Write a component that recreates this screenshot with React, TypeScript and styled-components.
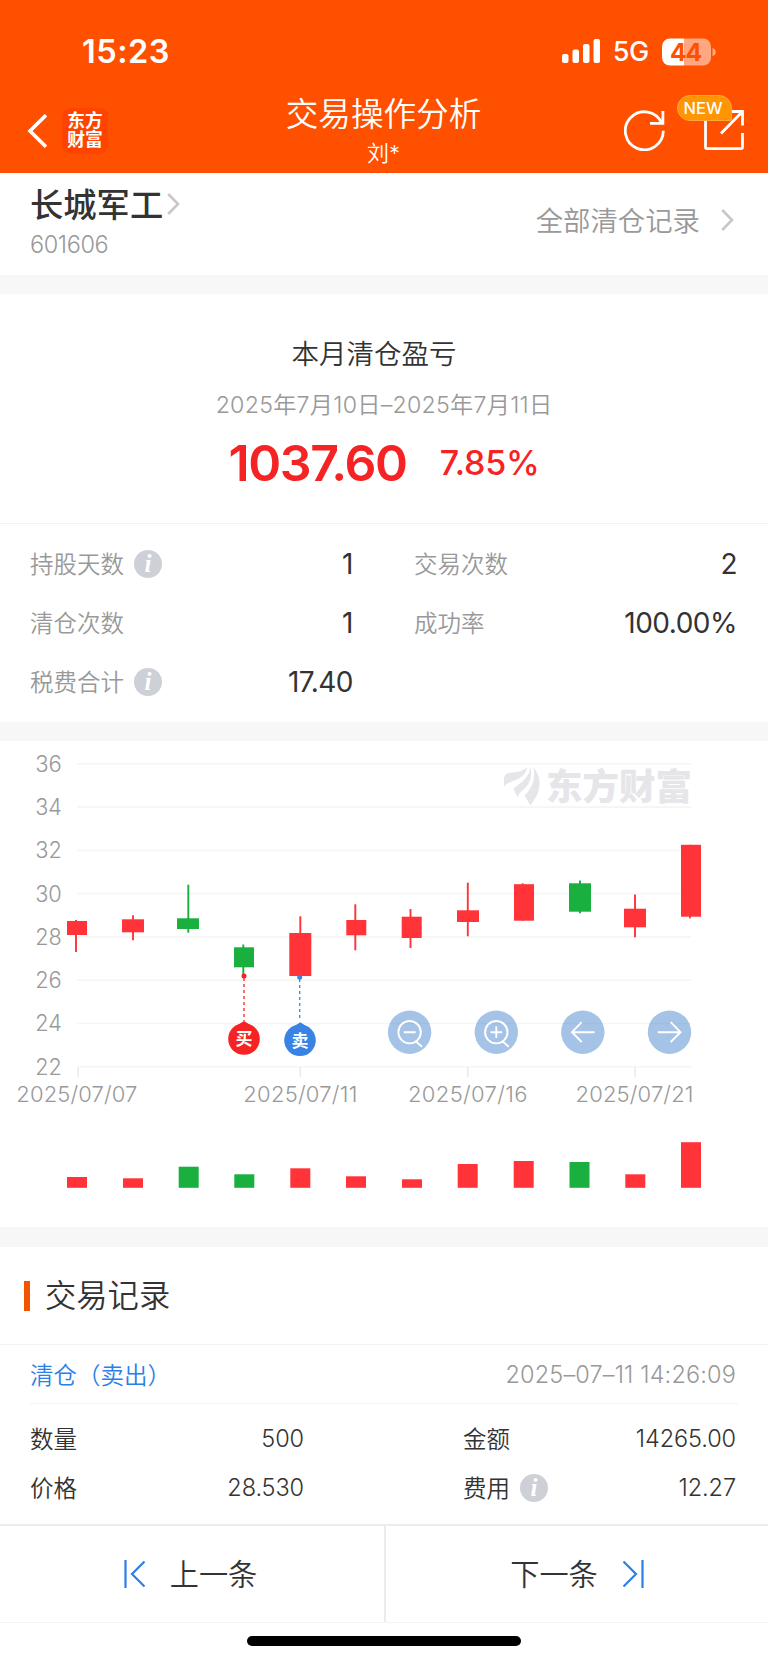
import React from 'react';
import styled, { createGlobalStyle } from 'styled-components';

const GlobalStyle = createGlobalStyle`
  * { box-sizing: border-box; }
  body { margin: 0; background: #fff; font-family: Inter, "Noto Sans CJK SC", sans-serif; color: #333; }
`;

const Screen = styled.div`
  width: 768px;
  height: 1663px;
  display: flex;
  flex-direction: column;
  background: #fff;
  overflow: hidden;
`;

const Header = styled.header`
  height: 173px;
  background: #ff5000;
  color: #fff;
  display: flex;
  flex-direction: column;
`;

const StatusBar = styled.div`
  height: 92px;
  padding: 11px 52px 0 82px;
  display: flex;
  align-items: center;
  justify-content: space-between;
`;

const Clock = styled.span`
  font-size: 32.5px;
  font-weight: 600;
  letter-spacing: 0.5px;
`;

const StatusRight = styled.div`
  display: flex;
  align-items: center;
`;

const Network = styled.span`
  font-size: 27px;
  font-weight: 500;
  letter-spacing: -0.3px;
  margin: 0 13px 0 12px;
`;

const NavBar = styled.div`
  flex: 1;
  display: grid;
  grid-template-columns: 200px 1fr 200px;
`;

const NavLeft = styled.div`
  display: flex;
  align-items: center;
  padding: 0 0 4px 27px;
`;

const NavRight = styled.div`
  display: flex;
  align-items: center;
  justify-content: flex-end;
  padding: 0 24px 5px 0;
`;

const AppLogo = styled.div`
  width: 46px;
  height: 46px;
  margin-left: 15px;
  border-radius: 9px;
  background: #ff4300;
  display: flex;
  flex-direction: column;
  align-items: center;
  justify-content: center;
  padding-bottom: 1px;
  font-size: 17.8px;
  font-weight: 700;
  line-height: 19.5px;
`;

const NavCenter = styled.div`
  display: flex;
  flex-direction: column;
  align-items: center;
  padding-right: 1px;
`;

const NavTitle = styled.h1`
  margin: 0;
  font-size: 32.6px;
  font-weight: 350;
  line-height: 45px;
`;

const NavSub = styled.span`
  font-size: 22px;
  font-weight: 350;
  line-height: 32px;
`;

const ShareWrap = styled.div`
  position: relative;
  width: 40px;
  height: 40px;
  margin-left: 39px;
`;

const NewBadge = styled.span`
  position: absolute;
  left: -27px;
  top: -15px;
  width: 55px;
  height: 26px;
  padding-right: 3px;
  border-radius: 13px 13px 2px 13px;
  background: #ff9500;
  border: 1px solid #ffa83a;
  font-size: 16.5px;
  font-weight: 500;
  line-height: 25px;
  text-align: center;
`;

const StockBar = styled.section`
  height: 102px;
  padding: 0 34px 0 30px;
  display: flex;
  justify-content: space-between;
`;

const StockName = styled.div`
  display: flex;
  align-items: center;
  height: 62px;
  font-size: 33.3px;
  font-weight: 500;
  gap: 4px;
`;

const StockCode = styled.div`
  font-size: 23.5px;
  font-weight: 350;
  line-height: 20px;
  letter-spacing: -0.4px;
  color: #999;
`;

const Raised = styled.span<{ $by: number }>`
  display: block;
  padding-bottom: ${p => p.$by * 2}px;
`;

const AllRecords = styled.div`
  display: flex;
  align-items: center;
  height: 94px;
  gap: 21px;
  font-size: 27.4px;
  font-weight: 350;
  color: #999;
`;

const Divider = styled.div<{ $h: number }>`
  height: ${p => p.$h}px;
  flex: none;
  background: #f7f7f7;
`;

const Summary = styled.section`
  height: 230px;
  display: flex;
  flex-direction: column;
  align-items: center;
  border-bottom: 1px solid #f2f2f2;
`;

const SummaryTitle = styled.h2`
  margin: 40px 20px 0 0;
  font-size: 27.5px;
  font-weight: 350;
  line-height: 40px;
`;

const SummaryRange = styled.div`
  margin-top: 14px;
  font-size: 23.2px;
  font-weight: 350;
  line-height: 34px;
  letter-spacing: 0.25px;
  color: #999;
`;

const Profit = styled.div`
  display: flex;
  align-items: center;
  gap: 33px;
  height: 66px;
  margin-top: 8px;
  color: #f52323;
`;

const ProfitAmount = styled.span`
  font-size: 50px;
  font-weight: 600;
  letter-spacing: -1.4px;
`;

const ProfitRate = styled.span`
  font-size: 34px;
  font-weight: 500;
  letter-spacing: -0.2px;
  padding-bottom: 2px;
`;

const Stats = styled.section`
  height: 198px;
  padding: 10px 32px 0 30px;
  display: grid;
  grid-template-columns: 323px 323px;
  grid-auto-rows: 59px;
  column-gap: 61px;
`;

const Cell = styled.div`
  display: flex;
  align-items: center;
  justify-content: space-between;
`;

const StatLabel = styled.span`
  display: flex;
  align-items: center;
  gap: 10px;
  font-size: 23.5px;
  font-weight: 350;
  color: #999;
`;

const StatValue = styled.span`
  font-size: 28px;
  font-weight: 400;
  letter-spacing: -0.5px;
`;

const ChartSection = styled.section`
  height: 486px;
`;

const SectionHead = styled.div`
  height: 98px;
  padding-left: 24px;
  display: flex;
  align-items: center;
  gap: 15px;
  border-bottom: 1px solid #f2f2f2;
  font-size: 31.3px;
  font-weight: 350;
`;

const Accent = styled.i`
  width: 6px;
  height: 30px;
  background: #f25500;
`;

const TradeHead = styled.div`
  height: 59px;
  margin: 0 30px;
  padding-right: 2px;
  display: flex;
  align-items: center;
  justify-content: space-between;
  border-bottom: 1px solid #f4f4f4;
  font-size: 23.5px;
  font-weight: 350;
`;

const TradeType = styled.span`
  font-family: "Noto Sans CJK SC", sans-serif;
  padding-bottom: 1px;
  color: #2b7fe9;
`;

const TradeTime = styled.time`
  letter-spacing: 0.15px;
  color: #999;
`;

const TradeBody = styled.div`
  height: 120px;
  padding: 10px 32px 0 30px;
  display: grid;
  grid-template-columns: 274px 273px;
  grid-auto-rows: 49px;
  justify-content: space-between;
  font-size: 23.5px;
  font-weight: 350;
`;

const TradeLabel = styled.span`
  display: flex;
  align-items: center;
  gap: 10px;
`;

const TradeValue = styled.span`
  letter-spacing: -0.1px;
`;

const Pager = styled.nav`
  height: 99px;
  display: grid;
  grid-template-columns: 1fr 1fr;
  border-top: 2px solid #ececec;
  border-bottom: 1px solid #f4f4f4;
`;

const PagerButton = styled.button<{ $next?: boolean }>`
  border: 0;
  border-left: ${p => (p.$next ? '2px solid #ececec' : '0')};
  padding: 0 ${p => (p.$next ? 0 : 3)}px 0 0;
  background: none;
  display: flex;
  align-items: center;
  justify-content: center;
  gap: 24px;
  font-family: Inter, "Noto Sans CJK SC", sans-serif;
  font-size: 29.2px;
  font-weight: 350;
  color: #333;
`;

const HomeArea = styled.div`
  flex: 1;
  display: flex;
  justify-content: center;
  padding-top: 13px;
`;

const HomeBar = styled.div`
  width: 274px;
  height: 10px;
  border-radius: 5px;
  background: #000;
`;

const Info = () => (
  <svg width="28" height="28" viewBox="0 0 28 28">
    <circle cx="14" cy="14" r="14" fill="#cdd0d6" />
    <text x="14" y="22" fontSize="25" fontFamily='"Liberation Serif", serif' fontStyle="italic" fontWeight="700" textAnchor="middle" fill="#fff">i</text>
  </svg>
);

const Chevron = () => (
  <svg width="13" height="24" viewBox="0 0 13 24" fill="none" stroke="#c8c8c8" strokeWidth="2.6">
    <path d="M1.2 2 L11 12 L1.2 22" />
  </svg>
);

const Stat = ({ label, value, info }: { label: string; value: string; info?: boolean }) => (
  <Cell>
    <StatLabel><Raised $by={1}>{label}</Raised>{info && <Info />}</StatLabel>
    <StatValue>{value}</StatValue>
  </Cell>
);

const Trade = ({ label, value, info }: { label: string; value: string; info?: boolean }) => (
  <Cell>
    <TradeLabel><Raised $by={1}>{label}</Raised>{info && <Info />}</TradeLabel>
    <TradeValue>{value}</TradeValue>
  </Cell>
);

const UP = '#ff3338';
const DOWN = '#19b03f';

// left, width, body top, body bottom, wick x, wick top, wick bottom, volume left, volume top, colour
const CANDLES: [number, number, number, number, number, number, number, number, number, string][] = [
  [67, 20, 921, 935, 76, 920, 952, 67, 1177, UP],
  [122, 22, 919.3, 932.3, 133, 915.3, 940.3, 123, 1178.3, UP],
  [177, 22, 918.3, 929, 188.3, 884.7, 932.7, 178.7, 1166.7, DOWN],
  [234, 20, 947.3, 967.3, 243.3, 944.5, 976, 234.3, 1174.3, DOWN],
  [289.3, 22, 933, 976, 300.3, 916.3, 976, 290.3, 1168.3, UP],
  [346.3, 20, 920, 935.3, 355.3, 904.3, 950.3, 346, 1176.3, UP],
  [401.7, 20, 916.7, 938, 410.5, 909, 948, 402, 1179.3, UP],
  [457, 22, 910.3, 922, 467.8, 882.7, 936.3, 457.7, 1164, UP],
  [514, 20, 884.2, 920.7, 522.7, 883.3, 920.7, 513.7, 1161, UP],
  [569, 22, 883.3, 911.7, 580, 880.5, 913.3, 569.5, 1162, DOWN],
  [624, 22, 908.7, 927.3, 635, 894.5, 937.3, 625.3, 1174.3, UP],
  [681, 20, 844.8, 916.7, 690, 844.8, 918.3, 681, 1142.2, UP],
];

const DATES: [string, number, number, number][] = [
  ['2025/07/07', 16.3, 121, 78],
  ['2025/07/11', 243.3, 114, 300.3],
  ['2025/07/16', 408, 119.5, 467.8],
  ['2025/07/21', 575.5, 118, 635],
];

const KLineChart = () => (
  <svg width="768" height="486" viewBox="0 741 768 486" fontFamily='Inter, "Noto Sans CJK SC", sans-serif'>
    {[36, 34, 32, 30, 28, 26, 24, 22].map((v, i) => (
      <g key={v}>
        <path d={`M77.3 ${763.8 + i * 43.28} H691`} stroke="#f5f5f6" strokeWidth="1.6" />
        <text x="35.2" y={771.8 + i * 43.28} fontSize="22.4" fontWeight="350" fill="#999" textLength="26.6" lengthAdjust="spacingAndGlyphs">{v}</text>
      </g>
    ))}
    {DATES.map(([d, x, w, tick]) => (
      <g key={d}>
        <path d={`M${tick} 1067 V1077`} stroke="#e8e8e8" strokeWidth="1.4" />
        <text x={x} y="1102" fontSize="22" fontWeight="350" fill="#999" textLength={w}>{d}</text>
      </g>
    ))}
    <g fill="#e6e5ea">
      <path d="M504 787 V778 C505 773.500 508 772.800 513 772.500 C519 772 524 770.500 527.500 767 C525 776 519 779 512 781.500 C508 783 505.500 784.500 504 787 Z" />
      <path d="M530 767 C530.500 776 521 783 513.500 788.500 L517.500 797.500 C519 792 524 790.500 527.500 785 C531.500 779 532 773 530 767 Z" />
      <path d="M533 767 C541 775 541 788 536.500 796 L530.500 805.500 L524.500 795.500 C533 788 536 777 533 767 Z" />
      <text x="546" y="800" fontSize="36.5" fontWeight="900" textLength="146">东方财富</text>
    </g>
    {CANDLES.map(([x, w, top, bottom, wx, high, low, vx, vTop, c]) => (
      <g key={x} fill={c}>
        <rect x={wx - 0.95} y={high} width="1.9" height={low - high} />
        <rect x={x} y={top} width={w} height={bottom - top} />
        <rect x={vx} y={vTop} width="20" height={1187.8 - vTop} />
      </g>
    ))}
    <path d="M244 978 V1021" stroke="#f52323" strokeWidth="1.3" strokeDasharray="3 3" />
    <circle cx="244" cy="976" r="2.5" fill="#f52323" />
    <path d="M299.700 979 V1020" stroke="#3883e3" strokeWidth="1.3" strokeDasharray="3 3" />
    <circle cx="299.700" cy="977.300" r="2.500" fill="#3883e3" />
    <g fill="#f52323">
      <path d="M244 1021 L254 1027.500 H234 Z" />
      <circle cx="244" cy="1039" r="15.8" />
      <text x="244" y="1045.3" fontSize="17" fontWeight="700" fill="#fff" textAnchor="middle">买</text>
    </g>
    <g fill="#3883e3">
      <path d="M300.300 1022.300 L310 1028.800 H290.500 Z" />
      <circle cx="300" cy="1040.300" r="15.8" />
      <text x="300" y="1046.600" fontSize="17" fontWeight="700" fill="#fff" textAnchor="middle">卖</text>
    </g>
    {[409.6, 496.3, 582.8, 669.5].map(cx => (
      <circle key={cx} cx={cx} cy="1032.2" r="21.7" fill="#2f74c4" fillOpacity="0.43" />
    ))}
    <g fill="none" stroke="#fff" strokeWidth="1.9">
      <circle cx="409.600" cy="1032.200" r="11.200" />
      <path d="M403.800 1032.200 H415.600 M416 1041.500 L422 1046.800" />
      <circle cx="496.300" cy="1032.200" r="11.200" />
      <path d="M490.500 1032.200 H502.200 M496.300 1026.300 V1038 M502.700 1041.500 L508.700 1046.800" />
      <path d="M594.500 1032.200 H572 M581.700 1022.200 L572 1032.200 L581.700 1042" />
      <path d="M657.800 1032.200 H680.500 M670.700 1022.200 L680.500 1032.200 L670.700 1042" />
    </g>
  </svg>
);

export default function App() {
  return (
    <Screen>
      <GlobalStyle />
      <Header>
        <StatusBar>
          <Clock>15:23</Clock>
          <StatusRight>
            <svg width="39" height="25" viewBox="0 0 39 25" fill="#fff">
              <rect x="0" y="15" width="6.500" height="9" rx="2" />
              <rect x="10.500" y="10.500" width="6.500" height="13.500" rx="2" />
              <rect x="21" y="5" width="6.500" height="19" rx="2" />
              <rect x="31.500" y="0" width="6.500" height="24" rx="2" />
            </svg>
            <Network>5G</Network>
            <svg width="54" height="28" viewBox="0 0 54 28">
              <clipPath id="battery"><rect width="49" height="27" rx="8" y="0.500" /></clipPath>
              <g clipPath="url(#battery)">
                <rect width="22" height="28" fill="#fff" />
                <rect x="22" width="28" height="28" fill="#ffa780" />
              </g>
              <path d="M50.500 10 Q53.800 11 53.800 14 Q53.800 17 50.500 18 Z" fill="#ffa780" />
              <text x="8" y="23" fontSize="24.500" fontWeight="700" fontFamily="Inter, sans-serif" fill="#ff5000" textLength="32">44</text>
            </svg>
          </StatusRight>
        </StatusBar>
        <NavBar>
          <NavLeft>
            <svg width="20" height="34" viewBox="0 0 20 34" fill="none" stroke="#fff" strokeWidth="3.600">
              <path d="M19 1.200 L3 17 L19 32.800" />
            </svg>
            <AppLogo><span>东方</span><span>财富</span></AppLogo>
          </NavLeft>
          <NavCenter>
            <NavTitle>交易操作分析</NavTitle>
            <NavSub>刘*</NavSub>
          </NavCenter>
          <NavRight>
            <svg width="41" height="41" viewBox="0 0 41 41" fill="none" stroke="#fff" strokeWidth="2.800">
              <path d="M39.300 20.800 A19 19 0 1 1 37.800 13.400 M26 13.400 H38.900 V1" />
            </svg>
            <ShareWrap>
              <svg width="40" height="40" viewBox="0 0 40 40" fill="none" stroke="#fff" strokeWidth="2.800">
                <path d="M1.500 8 V37 Q1.500 38.600 3.200 38.600 H36.800 Q38.500 38.600 38.500 37 V23 M26 1.500 H38.500 V15.500 M38.500 1.500 L17 23.500" />
              </svg>
              <NewBadge>NEW</NewBadge>
            </ShareWrap>
          </NavRight>
        </NavBar>
      </Header>

      <StockBar>
        <div>
          <StockName><Raised $by={2}>长城军工</Raised><Chevron /></StockName>
          <StockCode>601606</StockCode>
        </div>
        <AllRecords><Raised $by={1}>全部清仓记录</Raised><Chevron /></AllRecords>
      </StockBar>
      <Divider $h={19} />

      <Summary>
        <SummaryTitle>本月清仓盈亏</SummaryTitle>
        <SummaryRange>2025年7月10日–2025年7月11日</SummaryRange>
        <Profit>
          <ProfitAmount>1037.60</ProfitAmount>
          <ProfitRate>7.85%</ProfitRate>
        </Profit>
      </Summary>

      <Stats>
        <Stat label="持股天数" value="1" info />
        <Stat label="交易次数" value="2" />
        <Stat label="清仓次数" value="1" />
        <Stat label="成功率" value="100.00%" />
        <Stat label="税费合计" value="17.40" info />
      </Stats>
      <Divider $h={19} />

      <ChartSection><KLineChart /></ChartSection>
      <Divider $h={20} />

      <SectionHead><Accent /><Raised $by={2}>交易记录</Raised></SectionHead>
      <TradeHead>
        <TradeType>清仓（卖出）</TradeType>
        <TradeTime>2025–07–11 14:26:09</TradeTime>
      </TradeHead>
      <TradeBody>
        <Trade label="数量" value="500" />
        <Trade label="金额" value="14265.00" />
        <Trade label="价格" value="28.530" />
        <Trade label="费用" value="12.27" info />
      </TradeBody>

      <Pager>
        <PagerButton>
          <svg width="22" height="28" viewBox="0 0 22 28" fill="none" stroke="#2b7fe9" strokeWidth="2.200">
            <path d="M1.500 0 V28 M20.500 1.500 L8 14 L20.500 26.500" />
          </svg>
          <Raised $by={2}>上一条</Raised>
        </PagerButton>
        <PagerButton $next>
          <Raised $by={2}>下一条</Raised>
          <svg width="22" height="28" viewBox="0 0 22 28" fill="none" stroke="#2b7fe9" strokeWidth="2.200">
            <path d="M20.500 0 V28 M1.500 1.500 L14 14 L1.500 26.500" />
          </svg>
        </PagerButton>
      </Pager>
      <HomeArea><HomeBar /></HomeArea>
    </Screen>
  );
}
